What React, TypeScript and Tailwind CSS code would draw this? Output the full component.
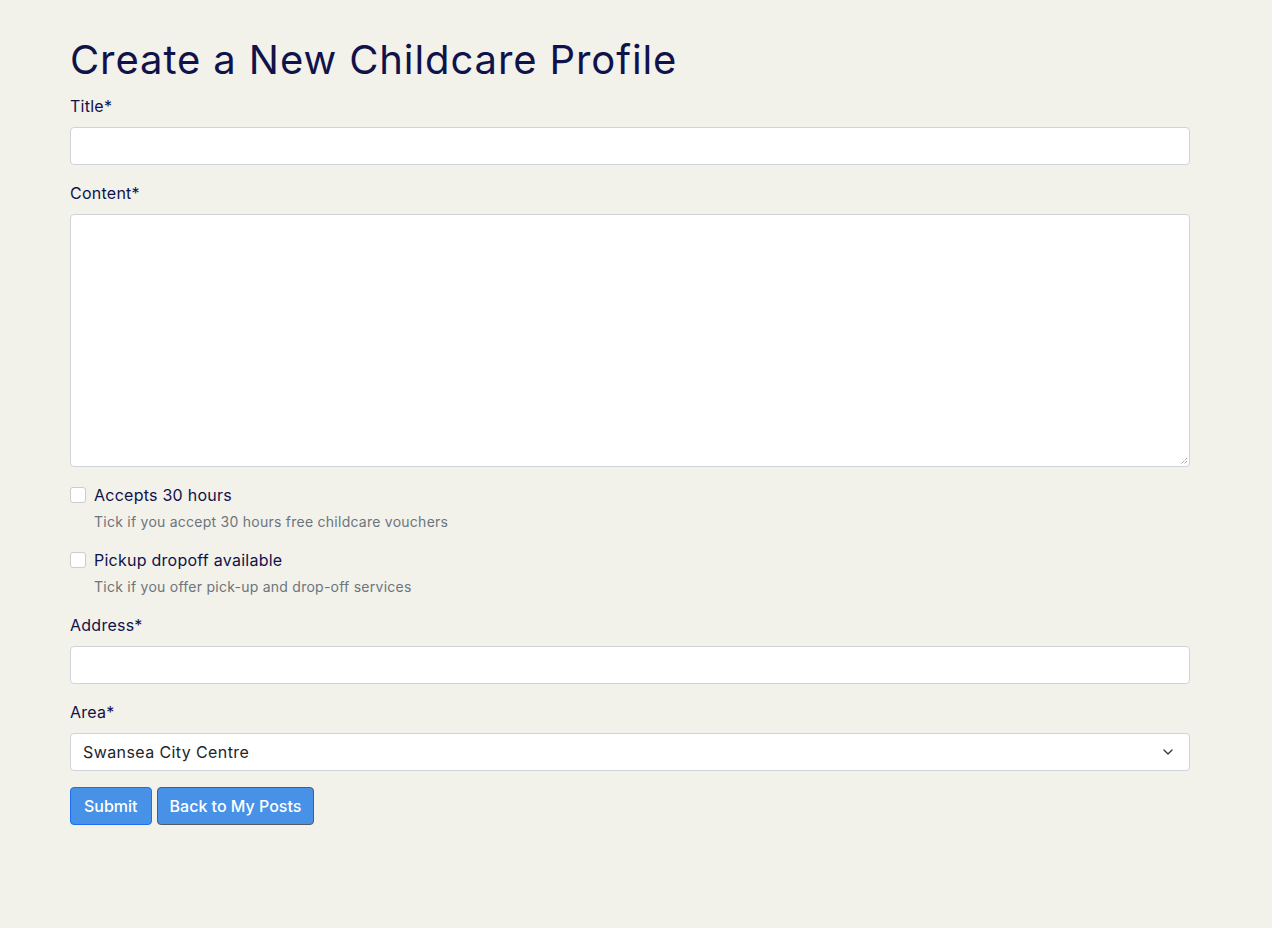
import { ChevronDown } from "lucide-react";

const font = { fontFamily: "Inter, 'Noto Sans', sans-serif" };

function Field({ label, children }: { label: string; children: React.ReactNode }) {
  return (
    <div className="mb-4">
      <label className="block mb-[9px] text-[16px] leading-6 tracking-[0.25px] text-[#10124a]">{label}</label>
      {children}
    </div>
  );
}

function Check({ label, help }: { label: string; help: string }) {
  return (
    <div className="mb-4">
      <div className="flex items-center gap-2 h-6">
        <span className="w-4 h-4 bg-white border border-[#c9ccd1] rounded-[3px]"></span>
        <span className="text-[16px] tracking-[0.25px] text-[#10124a]">{label}</span>
      </div>
      <p className="mt-1 ml-6 text-[14px] leading-[21px] tracking-[0.25px] text-[#6c757d]">{help}</p>
    </div>
  );
}

export default function App() {
  return (
    <div className="min-h-[928px] bg-[#f2f1ea]" style={font}>
      <div className="w-[1120px] ml-[70px] pt-[36px]">
        <h1 className="text-[40px] leading-[48px] mb-[10px] tracking-[0.9px] text-[#10124a]">
          Create a New Childcare Profile
        </h1>
        <Field label="Title*">
          <div className="h-[38px] bg-white border border-[#ced4da] rounded"></div>
        </Field>
        <Field label="Content*">
          <div className="relative h-[253px] bg-white border border-[#ced4da] rounded">
            <svg className="absolute right-[1px] bottom-[1px]" width="9" height="9" viewBox="0 0 9 9">
              <path d="M8 2L2 8M8 5L5 8" stroke="#777" strokeWidth="1" strokeDasharray="1 1" />
            </svg>
          </div>
        </Field>
        <Check label="Accepts 30 hours" help="Tick if you accept 30 hours free childcare vouchers" />
        <Check label="Pickup dropoff available" help="Tick if you offer pick-up and drop-off services" />
        <Field label="Address*">
          <div className="h-[38px] bg-white border border-[#ced4da] rounded"></div>
        </Field>
        <Field label="Area*">
          <div className="h-[38px] bg-white border border-[#ced4da] rounded flex items-center justify-between pl-3 pr-[13px]">
            <span className="text-[16px] tracking-[0.4px] text-[#212529]">Swansea City Centre</span>
            <ChevronDown size={16} strokeWidth={2} className="text-[#343a40]" />
          </div>
        </Field>
        <div className="flex gap-[5px]">
          <button className="h-[38px] px-[13px] bg-[#4791e6] text-white text-[16px] font-medium border border-[#1b6ff2] rounded">
            Submit
          </button>
          <button className="h-[38px] px-3 bg-[#4791e6] text-white text-[16px] font-medium border border-[#545b68] rounded">
            Back to My Posts
          </button>
        </div>
      </div>
    </div>
  );
}
